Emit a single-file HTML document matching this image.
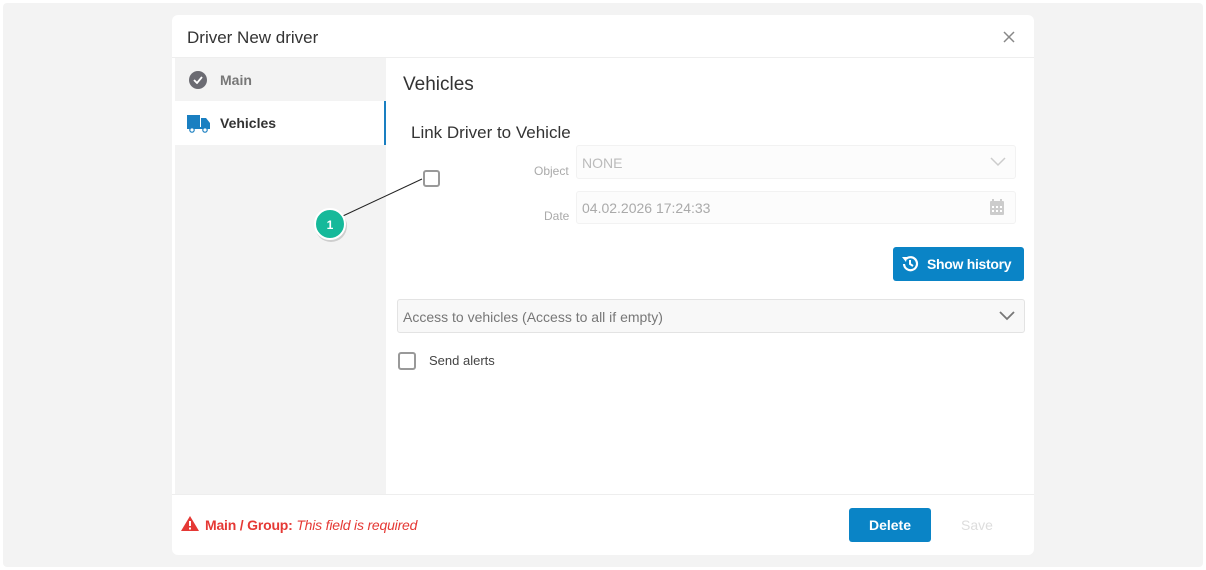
<!DOCTYPE html>
<html><head><meta charset="utf-8"><style>
*{box-sizing:border-box;margin:0;padding:0}
body{width:1206px;height:570px;background:#fff;font-family:"Liberation Sans",Arial,sans-serif;position:relative;overflow:hidden;color:#333}
.a{position:absolute}
</style></head><body>
<div class="a" style="left:3px;top:3px;width:1200px;height:564px;background:#f3f3f3;border-radius:4px"></div>
<div class="a" style="left:172px;top:15px;width:862px;height:540px;background:#fff;border-radius:6px"></div>
<div class="a" style="left:187px;top:28px;font-size:17px;color:#333">Driver New driver</div>
<svg class="a" style="left:1003px;top:31px" width="12" height="12"><path d="M1 1L11 11M11 1L1 11" stroke="#888" stroke-width="1.5"/></svg>
<div class="a" style="left:172px;top:57px;width:862px;height:1px;background:#eee"></div>
<div class="a" style="left:175px;top:58px;width:211px;height:436px;background:#f3f3f3"></div>
<div class="a" style="left:175px;top:101px;width:211px;height:44px;background:#fff;border-right:2px solid #1a7fc1"></div>
<div class="a" style="left:189px;top:71px;width:18px;height:18px;border-radius:50%;background:#6b6b72"></div>
<svg class="a" style="left:193px;top:76px" width="10" height="8"><path d="M1 4L4 7L9 1" stroke="#fff" stroke-width="1.8" fill="none"/></svg>
<div class="a" style="left:220px;top:72px;font-size:14px;font-weight:bold;color:#777">Main</div>
<svg class="a" style="left:187px;top:114px" width="24" height="19"><rect x="0" y="1" width="13" height="12" fill="#1a7fc1"/><path d="M14 4h5l4 5v4h-9z" fill="#1a7fc1"/><rect x="0" y="13" width="23" height="2" fill="#1a7fc1"/><circle cx="5" cy="16" r="2.2" fill="#fff" stroke="#1a7fc1" stroke-width="1.2"/><circle cx="18" cy="16" r="2.2" fill="#fff" stroke="#1a7fc1" stroke-width="1.2"/></svg>
<div class="a" style="left:220px;top:115px;font-size:14px;font-weight:bold;color:#333">Vehicles</div>
<div class="a" style="left:403px;top:74px;font-size:19px;color:#333">Vehicles</div>
<div class="a" style="left:411px;top:123px;font-size:17px;color:#333">Link Driver to Vehicle</div>
<div class="a" style="left:423px;top:170px;width:17px;height:17px;border:2px solid #999;border-radius:3px"></div>
<div class="a" style="left:534px;top:164px;font-size:12px;color:#aaa">Object</div>
<div class="a" style="left:544px;top:209px;font-size:12px;color:#aaa">Date</div>
<div class="a" style="left:576px;top:145px;width:440px;height:34px;border:1px solid #f2f2f2;border-radius:3px;background:#fcfcfc"></div>
<div class="a" style="left:582px;top:155px;font-size:14px;color:#bbb">NONE</div>
<svg class="a" style="left:990px;top:157px" width="16" height="10"><path d="M1 1L8 8L15 1" stroke="#ccc" stroke-width="1.5" fill="none"/></svg>
<div class="a" style="left:576px;top:191px;width:440px;height:33px;border:1px solid #f2f2f2;border-radius:3px;background:#fcfcfc"></div>
<div class="a" style="left:582px;top:200px;font-size:14px;color:#aaa">04.02.2026 17:24:33</div>
<svg class="a" style="left:989px;top:198px" width="16" height="18"><rect x="1" y="3" width="14" height="14" rx="1" fill="#ccc"/><rect x="3" y="1" width="2" height="4" fill="#ccc"/><rect x="11" y="1" width="2" height="4" fill="#ccc"/><g fill="#fff"><rect x="3" y="8" width="2" height="2"/><rect x="7" y="8" width="2" height="2"/><rect x="11" y="8" width="2" height="2"/><rect x="3" y="12" width="2" height="2"/><rect x="7" y="12" width="2" height="2"/><rect x="11" y="12" width="2" height="2"/></g></svg>
<div class="a" style="left:893px;top:247px;width:131px;height:34px;background:#0a84c6;border-radius:3px"></div>
<svg class="a" style="left:900px;top:254px" width="20" height="20"><path d="M4 10A6.5 6.5 0 1 0 6 5" stroke="#fff" stroke-width="2.2" fill="none"/><path d="M2 3L7 3L6 8Z" fill="#fff"/><path d="M10 6V10L13 12" stroke="#fff" stroke-width="2" fill="none"/></svg>
<div class="a" style="left:927px;top:256px;font-size:14px;font-weight:bold;color:#fff;letter-spacing:-0.3px">Show history</div>
<div class="a" style="left:397px;top:299px;width:628px;height:34px;border:1px solid #e3e3e3;border-radius:3px;background:#f8f8f8"></div>
<div class="a" style="left:403px;top:309px;font-size:14px;color:#777">Access to vehicles (Access to all if empty)</div>
<svg class="a" style="left:999px;top:311px" width="16" height="10"><path d="M1 1L8 8L15 1" stroke="#777" stroke-width="1.8" fill="none"/></svg>
<div class="a" style="left:398px;top:352px;width:18px;height:18px;border:2px solid #999;border-radius:3px"></div>
<div class="a" style="left:429px;top:353px;font-size:13px;color:#444">Send alerts</div>
<div class="a" style="left:172px;top:494px;width:862px;height:1px;background:#eee"></div>
<svg class="a" style="left:180px;top:515px" width="20" height="17"><path d="M10 1L19 16H1Z" fill="#e53935"/><rect x="9" y="6" width="2" height="5" fill="#fff"/><rect x="9" y="12.5" width="2" height="2" fill="#fff"/></svg>
<div class="a" style="left:205px;top:517px;font-size:14px;color:#e53935;letter-spacing:-0.2px"><b>Main / Group:</b> <i>This field is required</i></div>
<div class="a" style="left:849px;top:508px;width:82px;height:34px;background:#0a84c6;border-radius:3px;color:#fff;font-size:14px;font-weight:bold;text-align:center;line-height:34px">Delete</div>
<div class="a" style="left:961px;top:517px;font-size:14px;color:#ddd">Save</div>
<svg class="a" style="left:300px;top:165px" width="150" height="80"><line x1="30" y1="57" x2="122" y2="14" stroke="#222" stroke-width="1"/><circle cx="31" cy="61" r="16" fill="#000" opacity=".15"/><circle cx="30" cy="59" r="15" fill="#16b99a" stroke="#fff" stroke-width="2"/><text x="30" y="64" font-size="12" font-weight="bold" fill="#fff" text-anchor="middle" font-family="Liberation Sans">1</text></svg>
</body></html>
